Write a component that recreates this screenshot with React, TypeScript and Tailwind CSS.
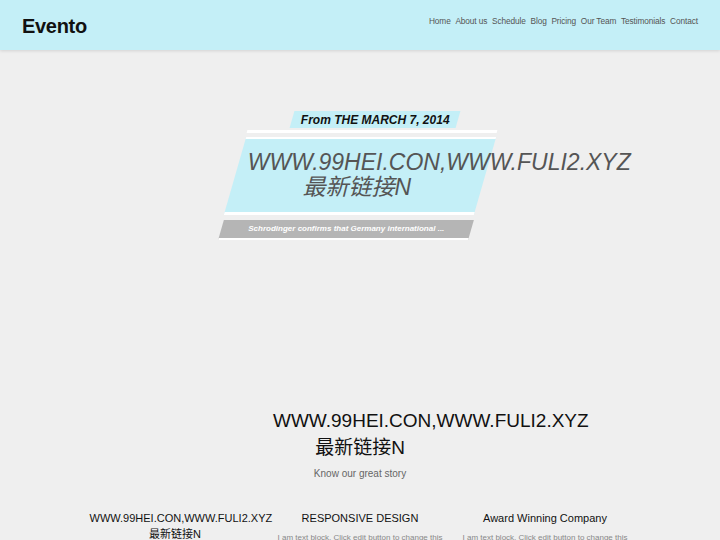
const navItems = ["Home", "About us", "Schedule", "Blog", "Pricing", "Our Team", "Testimonials", "Contact"];

const features = [
  { title: "WWW.99HEI.CON,WWW.FULI2.XYZ 最新链接N", text: "" },
  { title: "RESPONSIVE DESIGN", text: "I am text block. Click edit button to change this" },
  { title: "Award Winning Company", text: "I am text block. Click edit button to change this" },
];

export default function App() {
  return (
    <div className="min-h-[540px] bg-[#efefef] font-['Liberation_Sans','Noto_Sans_CJK_SC',sans-serif] overflow-hidden">
      {/* header */}
      <header className="h-[50px] bg-[#c4eff7] shadow-[0_1px_3px_rgba(0,0,0,0.12)] flex items-center justify-between px-[22px]">
        <div className="text-[20px] font-bold text-[#111] tracking-[-0.3px] pt-[1px]">Evento</div>
        <nav className="flex gap-[4.7px] text-[8.3px] text-[#555] tracking-[-0.1px] -mt-[8px]">
          {navItems.map((item) => (
            <a key={item} href="#">{item}</a>
          ))}
        </nav>
      </header>

      {/* hero */}
      <section className="pt-[61px] h-[357px] flex flex-col items-center">
        <div className="ml-[30px] w-[166px] h-[17px] bg-[#c4eff7] -skew-x-[16deg] flex items-center justify-center">
          <span className="skew-x-[16deg] text-[12px] font-bold italic text-[#111]">From THE MARCH 7, 2014</span>
        </div>
        <div className="mt-[2px] ml-[24px] w-[250px] h-[3px] bg-white -skew-x-[16deg]" />
        <div className="mt-[4px] w-[250px] h-[78px] bg-[#c4eff7] border-t-2 border-b-[3px] border-white -skew-x-[16deg]">
          <div className="skew-x-[16deg] pl-[11px] pr-[21px] pt-[11px] text-center whitespace-nowrap text-[23px] leading-[25px] italic text-[#555]">
            WWW.99HEI.CON,WWW.FULI2.XYZ
            <br />
            最新链接N
          </div>
        </div>
        <div className="mt-[5px] -ml-[28px] w-[250px] h-[20px] bg-[#b5b5b5] border-b-2 border-white -skew-x-[16deg] flex items-center">
          <span className="skew-x-[16deg] pl-[27px] text-[8px] font-bold italic text-white">
            Schrodinger confirms that Germany international ...
          </span>
        </div>
      </section>

      {/* about */}
      <section className="flex flex-col items-center">
        <h2 className="w-[174px] text-center text-[19px] leading-[27px] text-[#111] whitespace-nowrap">
          <span className="block">WWW.99HEI.CON,WWW.FULI2.XYZ</span>
          <span className="block">最新链接N</span>
        </h2>
        <p className="mt-[5px] text-[10px] text-[#666]">Know our great story</p>
      </section>

      {/* features */}
      <section className="mt-[29px] mx-auto w-[555px] grid grid-cols-3">
        {features.map((f) => (
          <div key={f.title} className="px-[7px] text-center">
            <h3 className="text-[11px] leading-[16px] text-[#111]">{f.title}</h3>
            {f.text && <p className="mt-[6px] text-[8px] text-[#888] whitespace-nowrap">{f.text}</p>}
          </div>
        ))}
      </section>
    </div>
  );
}
